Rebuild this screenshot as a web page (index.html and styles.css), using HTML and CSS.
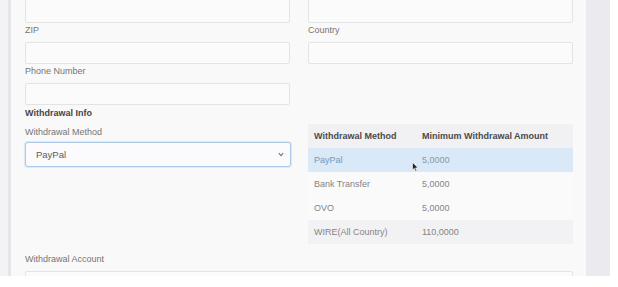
FILE: index.html
```html
<!DOCTYPE html>
<html>
<head>
<meta charset="utf-8">
<link rel="stylesheet" href="styles.css">
</head>
<body>
<div class="screen">
  <div class="card">
    <div class="grid top-grid">
      <div class="input first"></div>
      <div class="input first"></div>
      <div class="field">
        <div class="label">ZIP</div>
        <div class="input"></div>
      </div>
      <div class="field">
        <div class="label">Country</div>
        <div class="input"></div>
      </div>
      <div class="field">
        <div class="label">Phone Number</div>
        <div class="input"></div>
      </div>
      <div></div>
    </div>
    <div class="grid mid-grid">
      <div class="field">
        <div class="heading">Withdrawal Info</div>
        <div class="label method-label">Withdrawal Method</div>
        <div class="select">
          <span>PayPal</span>
          <svg class="chev" width="6" height="5" viewBox="0 0 6 5"><path d="M0.8 1.2 L3 3.6 L5.2 1.2" fill="none" stroke="#777" stroke-width="1.2"/></svg>
        </div>
      </div>
      <div class="table-wrap">
        <table class="methods">
          <colgroup><col class="col1"><col></colgroup>
          <thead>
            <tr><th>Withdrawal Method</th><th>Minimum Withdrawal Amount</th></tr>
          </thead>
          <tbody>
            <tr class="hover"><td class="c1">PayPal</td><td>5,0000</td></tr>
            <tr><td class="c1">Bank Transfer</td><td>5,0000</td></tr>
            <tr><td class="c1">OVO</td><td>5,0000</td></tr>
            <tr class="alt"><td class="c1">WIRE(All Country)</td><td>110,0000</td></tr>
          </tbody>
        </table>
        <svg class="cursor" width="7" height="10" viewBox="0 0 7 10"><path d="M0.5 0.5 L0.5 8 L2.3 6.3 L3.6 9.3 L4.8 8.8 L3.5 5.9 L6 5.8 Z" fill="#222" stroke="#fff" stroke-width="0.6"/></svg>
      </div>
    </div>
    <div class="field account">
      <div class="label">Withdrawal Account</div>
      <div class="input"></div>
    </div>
  </div>
</div>
</body>
</html>
```

FILE: styles.css
```css
html, body {
  margin: 0;
  padding: 0;
  background: #ffffff;
}

.screen {
  width: 610px;
  height: 276px;
  overflow: hidden;
  background: #ebebef;
  font-family: "Liberation Sans", Arial, sans-serif;
  display: flex;
  background-image: linear-gradient(to right, #f3f3f5 0, #f3f3f5 8px, transparent 8px);
}

.card {
  margin-left: 8px;
  width: 578px;
  box-sizing: border-box;
  border-left: 3px solid #e6e6ea;
  background: #f9f9fa;
  padding: 0 13px 0 14px;
}

.grid {
  display: grid;
  grid-template-columns: 265px 265px;
  column-gap: 18px;
}

.input {
  box-sizing: border-box;
  height: 22px;
  border: 1px solid #e4e4e7;
  border-radius: 2px;
  background: #fbfbfc;
}

.input.first {
  margin-top: -1px;
  height: 24px;
}

.label {
  font-size: 9px;
  line-height: 12px;
  color: #757575;
  margin: 1px 0 6px;
}

.heading {
  font-size: 9px;
  line-height: 12px;
  font-weight: bold;
  color: #454545;
  margin-top: 2px;
}

.label.method-label {
  margin: 7px 0 4px;
}

.select {
  box-sizing: border-box;
  height: 25px;
  width: 266px;
  border: 1px solid #a9c9e6;
  border-radius: 3px;
  box-shadow: 0 0 1px 1px rgba(170, 200, 230, 0.35);
  background: #fbfbfd;
  display: flex;
  align-items: center;
  justify-content: space-between;
  padding: 0 6px 0 10px;
  font-size: 9.5px;
  color: #5a5a5a;
}

.table-wrap {
  position: relative;
  margin-top: 19px;
}

.methods {
  width: 265px;
  table-layout: fixed;
  border-collapse: collapse;
  font-size: 9px;
}

.methods .col1 {
  width: 108px;
}

.methods th, .methods td {
  text-align: left;
  padding: 0 6px;
  white-space: nowrap;
}

.methods th {
  height: 24px;
  font-weight: bold;
  color: #4a4a4a;
  background: #f1f1f3;
}

.methods td {
  height: 24px;
  color: #858585;
  background: #fafafb;
}

.methods tr.hover td {
  background: #d9e9f7;
  color: #8a98a6;
}

.methods tr.hover td.c1 {
  color: #7099c0;
}

.methods tr.alt td {
  background: #f2f2f4;
}

.cursor {
  position: absolute;
  left: 104px;
  top: 38px;
}

.account {
  margin-top: 9px;
}

.account .input {
  width: 548px;
}
```
